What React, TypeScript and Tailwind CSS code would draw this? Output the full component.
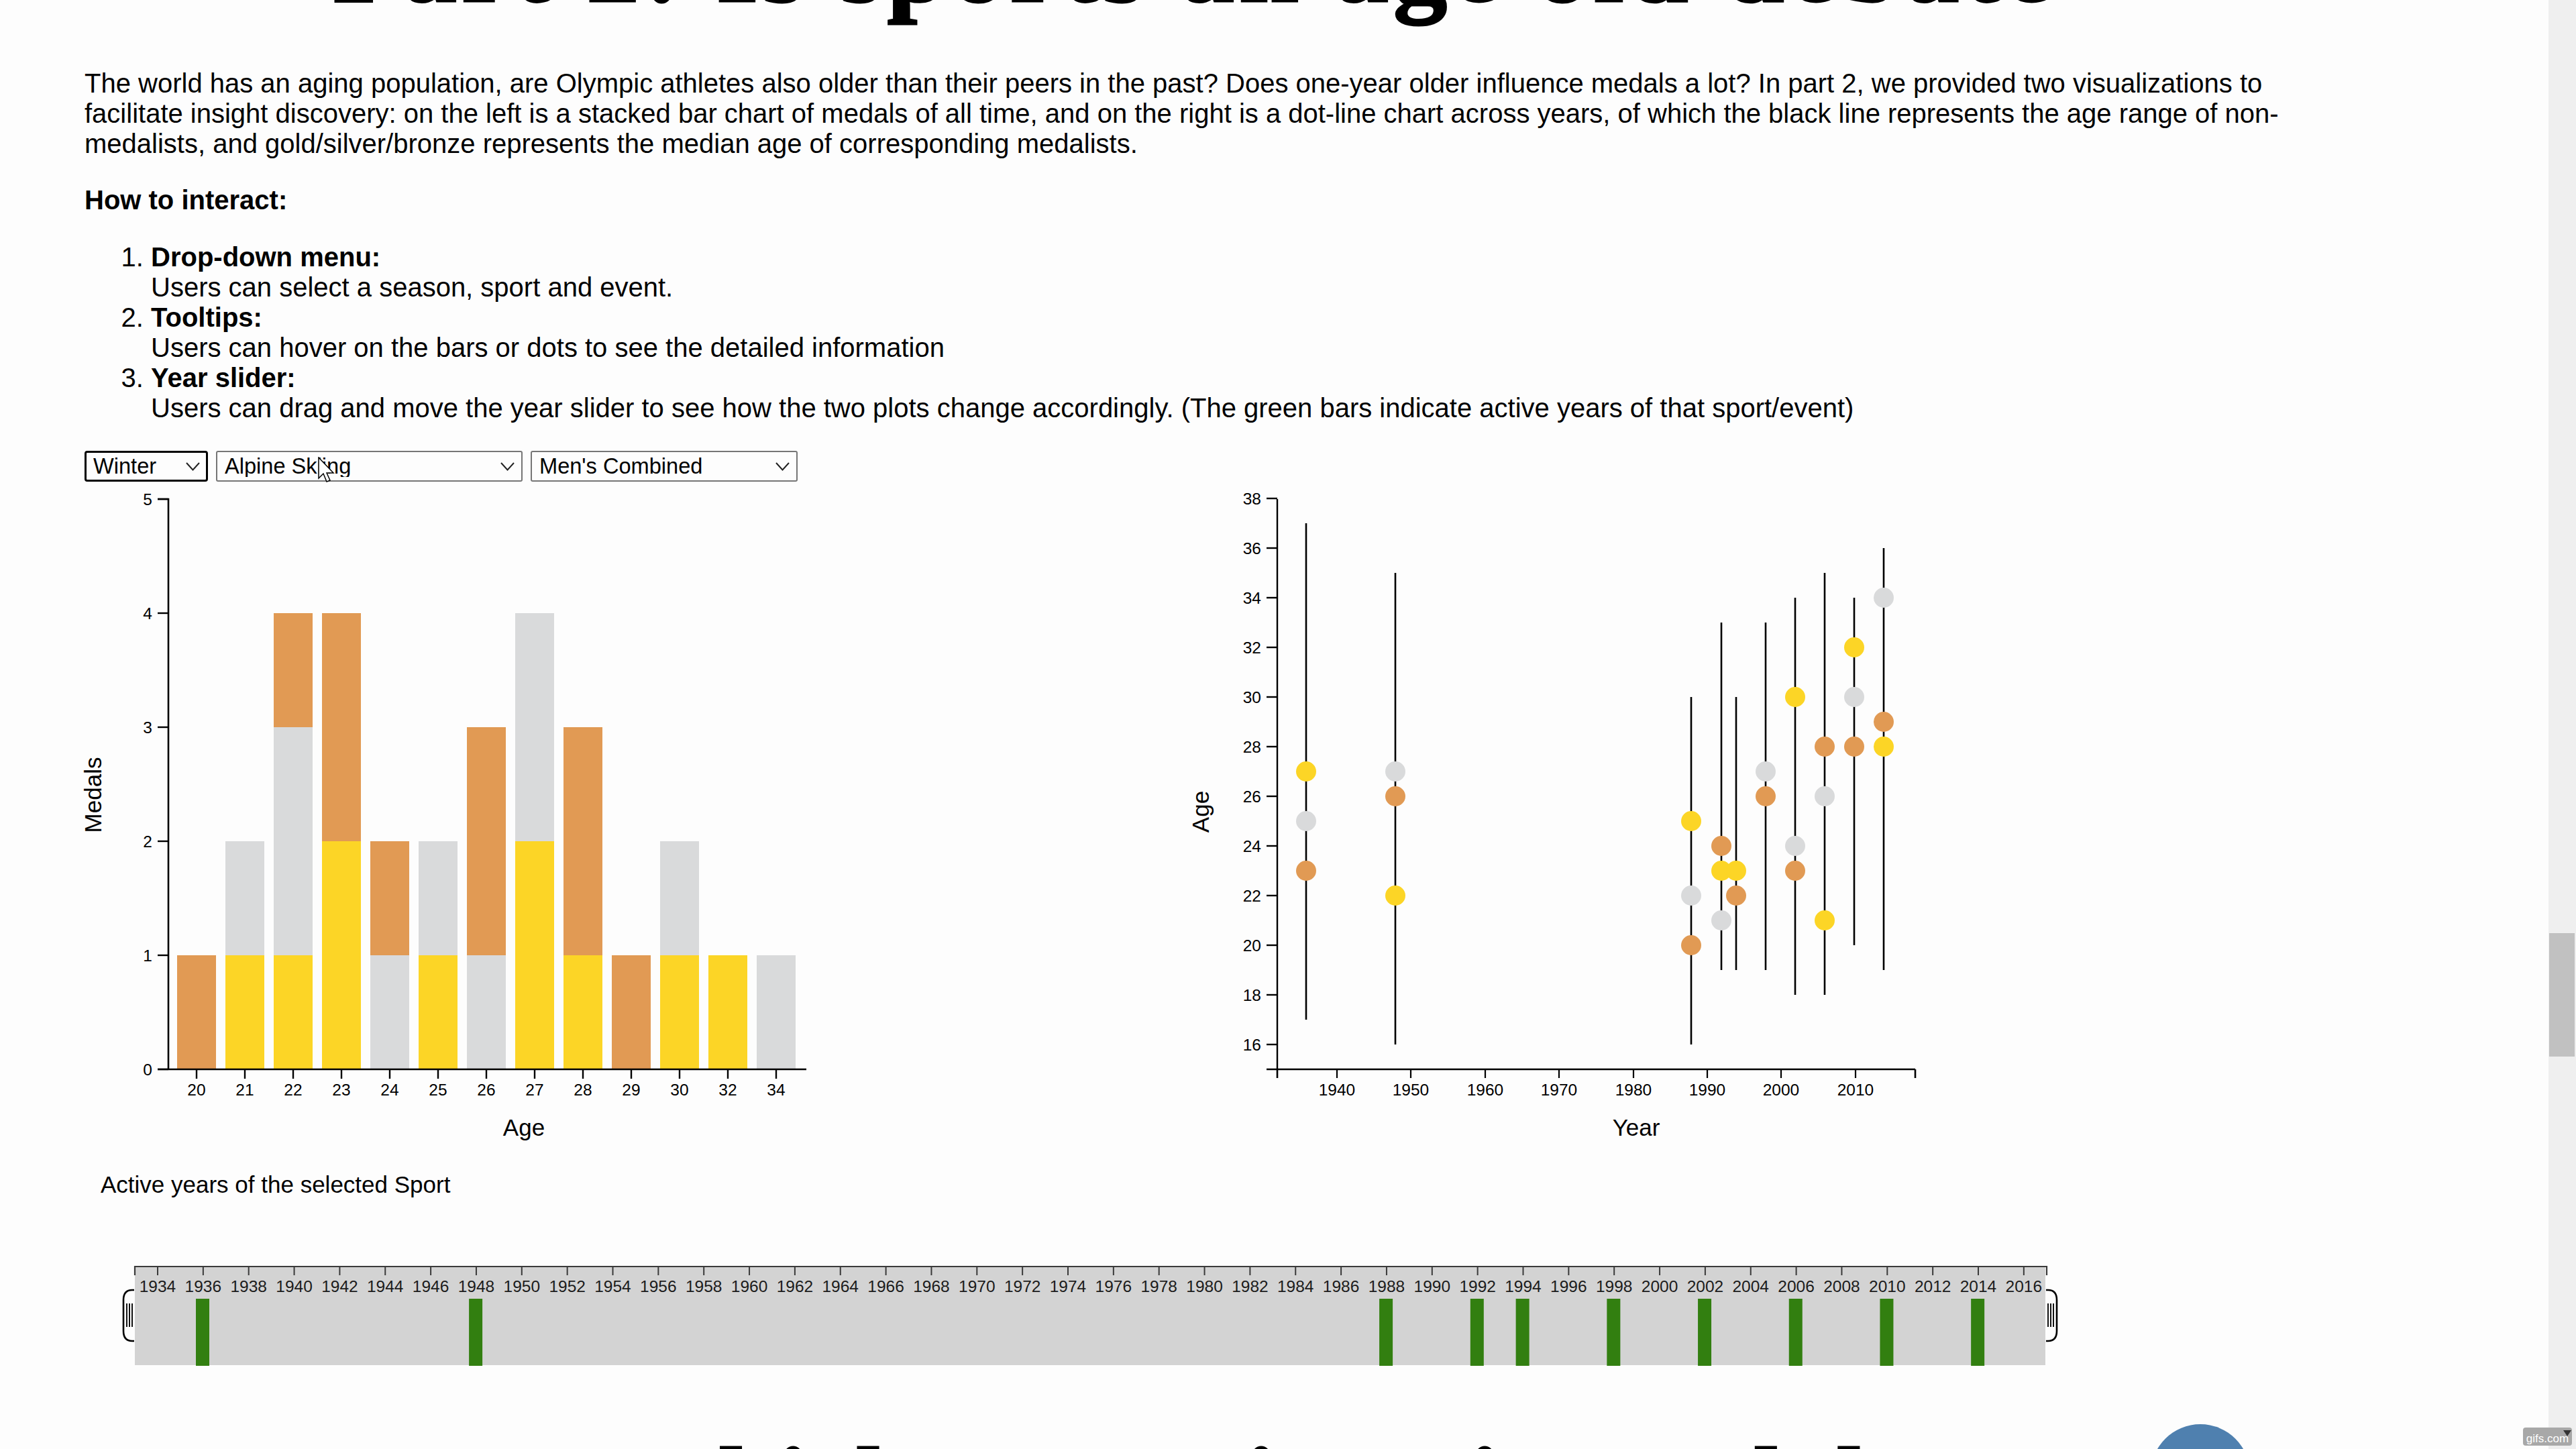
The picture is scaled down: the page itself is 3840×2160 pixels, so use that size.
import React from "react";

const BRONZE = "#e19a54";
const SILVER = "#d9dadb";
const GOLD = "#fcd526";

type Stack = [string, number, number, number];
const bars: Stack[] = [
  ["20", 0, 0, 1],
  ["21", 1, 1, 0],
  ["22", 1, 2, 1],
  ["23", 2, 0, 2],
  ["24", 0, 1, 1],
  ["25", 1, 1, 0],
  ["26", 0, 1, 2],
  ["27", 2, 2, 0],
  ["28", 1, 0, 2],
  ["29", 0, 0, 1],
  ["30", 1, 1, 0],
  ["32", 1, 0, 0],
  ["34", 0, 1, 0],
];

type Games = { y: number; lo: number; hi: number; g?: number; s?: number; b?: number };
const games: Games[] = [
  { y: 1936, lo: 17, hi: 37, g: 27, s: 25, b: 23 },
  { y: 1948, lo: 16, hi: 35, s: 27, b: 26, g: 22 },
  { y: 1988, lo: 16, hi: 30, g: 25, s: 22, b: 20 },
  { y: 1992, lo: 19, hi: 33, b: 24, g: 23, s: 21 },
  { y: 1994, lo: 19, hi: 30, g: 23, b: 22 },
  { y: 1998, lo: 19, hi: 33, s: 27, b: 26 },
  { y: 2002, lo: 18, hi: 34, g: 30, s: 24, b: 23 },
  { y: 2006, lo: 18, hi: 35, b: 28, s: 26, g: 21 },
  { y: 2010, lo: 20, hi: 34, g: 32, s: 30, b: 28 },
  { y: 2014, lo: 19, hi: 36, s: 34, b: 29, g: 28 },
];

const ageY = (a: number) => 1557 - 37 * (a - 16);
const dotX = (y: number) => Math.round(1991.5 + 11.04 * (y - 1940));
const tickX = (y: number) => Math.round(1993 + 11.04 * (y - 1940));

function Dropdown({ width, value, focused }: { width: string; value: string; focused?: boolean }) {
  return (
    <div className={`relative h-[46px] ${width}`}>
      <select
        defaultValue={value}
        className={
          focused
            ? "h-full w-full appearance-none rounded-[4px] border-[3px] border-black bg-[#fdfdfd] pl-[10px] text-[32.6px] leading-none text-black outline-none"
            : "h-full w-full appearance-none rounded-[3px] border-2 border-[#767676] bg-[#fdfdfd] pl-[11px] text-[32.6px] leading-none text-black outline-none"
        }
      >
        <option>{value}</option>
      </select>
      <svg className="pointer-events-none absolute right-[12px] top-[17px]" width="21" height="13" viewBox="0 0 21 13" fill="none">
        <path d="M1 1 L10.5 11.5 L20 1" stroke="#222" strokeWidth="2" />
      </svg>
    </div>
  );
}

function BarChart() {
  return (
    <svg width="1634" height="1000" viewBox="126 730 1634 1000" className="shrink-0 overflow-visible" fontFamily="'Liberation Sans', Arial, sans-serif">
      {bars.map(([age, g, s, b], i) => {
        const x = 264 + 72 * i;
        let top = 1594;
        const parts: [number, string][] = [[g, GOLD], [s, SILVER], [b, BRONZE]];
        return (
          <g key={age}>
            {parts.map(([n, c], k) => {
              if (!n) return null;
              top -= n * 170;
              return <rect key={k} x={x} y={top} width={58} height={n * 170} fill={c} />;
            })}
            <line x1={x + 29} x2={x + 29} y1={1594} y2={1608} stroke="#000" strokeWidth="2.4" />
            <text x={x + 29} y={1633} fontSize="24.5" textAnchor="middle" fill="#000">{age}</text>
          </g>
        );
      })}
      <path d="M235 744 H251 V1594" fill="none" stroke="#000" strokeWidth="2.6" />
      <path d="M235 1594 H1202" fill="none" stroke="#000" strokeWidth="2.6" />
      {[0, 1, 2, 3, 4, 5].map((v) => (
        <g key={v}>
          <line x1={235} x2={251} y1={1594 - v * 170} y2={1594 - v * 170} stroke="#000" strokeWidth="2.4" />
          <text x={227} y={1594 - v * 170 + 8.5} fontSize="24.5" textAnchor="end" fill="#000">{v}</text>
        </g>
      ))}
      <text x={781} y={1693} fontSize="35" textAnchor="middle" fill="#000">Age</text>
      <text transform="translate(151 1185) rotate(-90)" fontSize="35" textAnchor="middle" fill="#000">Medals</text>
    </svg>
  );
}

function DotChart() {
  return (
    <svg width="1140" height="1000" viewBox="1760 730 1140 1000" className="shrink-0 overflow-visible" fontFamily="'Liberation Sans', Arial, sans-serif">
      {games.map((d) => (
        <line key={d.y} x1={dotX(d.y)} x2={dotX(d.y)} y1={ageY(d.hi)} y2={ageY(d.lo)} stroke="#000" strokeWidth="2.6" />
      ))}
      {games.map((d) => (
        <g key={d.y}>
          {d.s !== undefined && <circle cx={dotX(d.y)} cy={ageY(d.s)} r="15" fill={SILVER} />}
          {d.b !== undefined && <circle cx={dotX(d.y)} cy={ageY(d.b)} r="15" fill={BRONZE} />}
          {d.g !== undefined && <circle cx={dotX(d.y)} cy={ageY(d.g)} r="15" fill={GOLD} />}
        </g>
      ))}
      <path d="M1904 744 V1594" fill="none" stroke="#000" strokeWidth="2.4" />
      {[16, 18, 20, 22, 24, 26, 28, 30, 32, 34, 36, 38].map((a) => (
        <g key={a}>
          <line x1={1888} x2={1904} y1={ageY(a)} y2={ageY(a)} stroke="#000" strokeWidth="2.4" />
          <text x={1880} y={ageY(a) + 8.5} fontSize="24.5" textAnchor="end" fill="#000">{a}</text>
        </g>
      ))}
      <path d="M1888 1594 H2855 M1904 1594 V1607 M2855 1594 V1607" fill="none" stroke="#000" strokeWidth="2.6" />
      {[1940, 1950, 1960, 1970, 1980, 1990, 2000, 2010].map((y) => (
        <g key={y}>
          <line x1={tickX(y)} x2={tickX(y)} y1={1594} y2={1607} stroke="#000" strokeWidth="2.2" />
          <text x={tickX(y)} y={1633} fontSize="24.5" textAnchor="middle" fill="#000">{y}</text>
        </g>
      ))}
      <text x={2439} y={1693} fontSize="35" textAnchor="middle" fill="#000">Year</text>
      <text transform="translate(1802 1210) rotate(-90)" fontSize="35" textAnchor="middle" fill="#000">Age</text>
    </svg>
  );
}

function Handle({ flip }: { flip?: boolean }) {
  const t = flip ? "translate(3050 0)" : "translate(200 0) scale(-1 1)";
  return (
    <g transform={t}>
      <path d="M0 1923 H3 Q16 1923 16 1938 V1984 Q16 1999 3 1999 H0" fill="#fdfdfd" stroke="#000" strokeWidth="2.6" />
      <path d="M3 1943 V1978 M7 1943 V1978 M11 1943 V1978" stroke="#111" strokeWidth="2" fill="none" />
    </g>
  );
}

function YearSlider() {
  const years: number[] = [];
  for (let y = 1934; y <= 2016; y += 2) years.push(y);
  return (
    <svg width="2920" height="170" viewBox="170 1870 2920 170" className="block" fontFamily="'Liberation Sans', Arial, sans-serif">
      <rect x={201} y={1888} width={2848} height={147} fill="#d3d3d3" />
      {games.map((d) => (
        <rect key={d.y} x={292 + 33.925 * (d.y - 1936)} y={1936} width={20} height={100} fill="#327f10" />
      ))}
      <path d="M201 1901 V1888 H3051 V1901" fill="none" stroke="#3a3a3a" strokeWidth="2.2" />
      {years.map((y) => {
        const x = 235 + 33.925 * (y - 1934);
        return (
          <g key={y}>
            <line x1={x} x2={x} y1={1888} y2={1901} stroke="#3a3a3a" strokeWidth="2" />
            <text x={x} y={1926} fontSize="24.5" textAnchor="middle" fill="#1c1c1c">{y}</text>
          </g>
        );
      })}
      <Handle />
      <Handle flip />
    </svg>
  );
}

export default function App() {
  return (
    <div className="relative flex h-[2160px] w-full overflow-hidden bg-[#fdfdfd] font-['Liberation_Sans',Arial,sans-serif] text-black">
      <main className="min-w-0 flex-1 pl-[126px]">
        <div className="w-[3310px]">
          <h1 className="mt-[-132px] whitespace-nowrap text-center font-['Liberation_Serif',serif] text-[160px] font-bold leading-none tracking-[7px] [-webkit-text-stroke:3px_black]">
            Part 2: Is sports an age old debate
          </h1>
          <p className="mt-[74px] text-[40px] leading-[45px]">
            The world has an aging population, are Olympic athletes also older than their peers in the past? Does one-year older influence medals a lot? In part 2, we provided two visualizations to facilitate insight discovery: on the left is a stacked bar chart of medals of all time, and on the right is a dot-line chart across years, of which the black line represents the age range of non-medalists, and gold/silver/bronze represents the median age of corresponding medalists.
          </p>
          <p className="mt-[39px] text-[40px] font-bold leading-[45px]">How to interact:</p>
          <ol className="mt-[40px] list-decimal pl-[99px] text-[40px] leading-[45px]">
            <li>
              <b>Drop-down menu:</b>
              <br />
              Users can select a season, sport and event.
            </li>
            <li>
              <b>Tooltips:</b>
              <br />
              Users can hover on the bars or dots to see the detailed information
            </li>
            <li>
              <b>Year slider:</b>
              <br />
              Users can drag and move the year slider to see how the two plots change accordingly. (The green bars indicate active years of that sport/event)
            </li>
          </ol>
        </div>

        <div className="relative mt-[41px] flex gap-[12px]">
          <Dropdown width="w-[184px]" value="Winter" focused />
          <Dropdown width="w-[457px]" value="Alpine Skiing" />
          <Dropdown width="w-[398px]" value="Men's Combined" />
          <svg className="pointer-events-none absolute left-[347px] top-[9px]" width="26" height="40" viewBox="0 0 26 40">
            <path d="M2 1 V32 L9 25 L14 37 L19 35 L14 24 L24 24 Z" fill="#fff" stroke="#000" strokeWidth="1.5" />
          </svg>
        </div>

        <div className="mt-[12px] flex">
          <BarChart />
          <DotChart />
        </div>

        <p className="ml-[24px] mt-[16px] text-[35px] leading-[39px]">Active years of the selected Sport</p>

        <div className="ml-[44px] mt-[85px]">
          <YearSlider />
        </div>

        <h2 className="mt-[95px] w-[3310px] whitespace-nowrap pr-[240px] text-center font-['Liberation_Serif',serif] text-[160px] font-bold leading-none [-webkit-text-stroke:3px_black]">
          Part 3: Which countries win medals?
        </h2>
      </main>

      <aside className="w-[41px] shrink-0 bg-[#efefef] pl-[1px] pt-[1391px]">
        <div className="h-[184px] w-[38px] bg-[#c1c1c1]" />
      </aside>

      <div className="absolute left-[3206px] top-[2123px] h-[148px] w-[148px] rounded-full bg-[#4f80af]" />

      <div className="absolute left-[3761px] top-[2128px] flex h-[27px] w-[73px] items-end justify-center rounded-[4px] bg-[#a8a8a8] text-[17px] leading-[20px] text-white">
        gifs.com
        <svg className="absolute right-[1px] top-[4px]" width="12" height="9" viewBox="0 0 12 9">
          <path d="M0 0 H12 L6 9 Z" fill="#333" />
        </svg>
      </div>
    </div>
  );
}
